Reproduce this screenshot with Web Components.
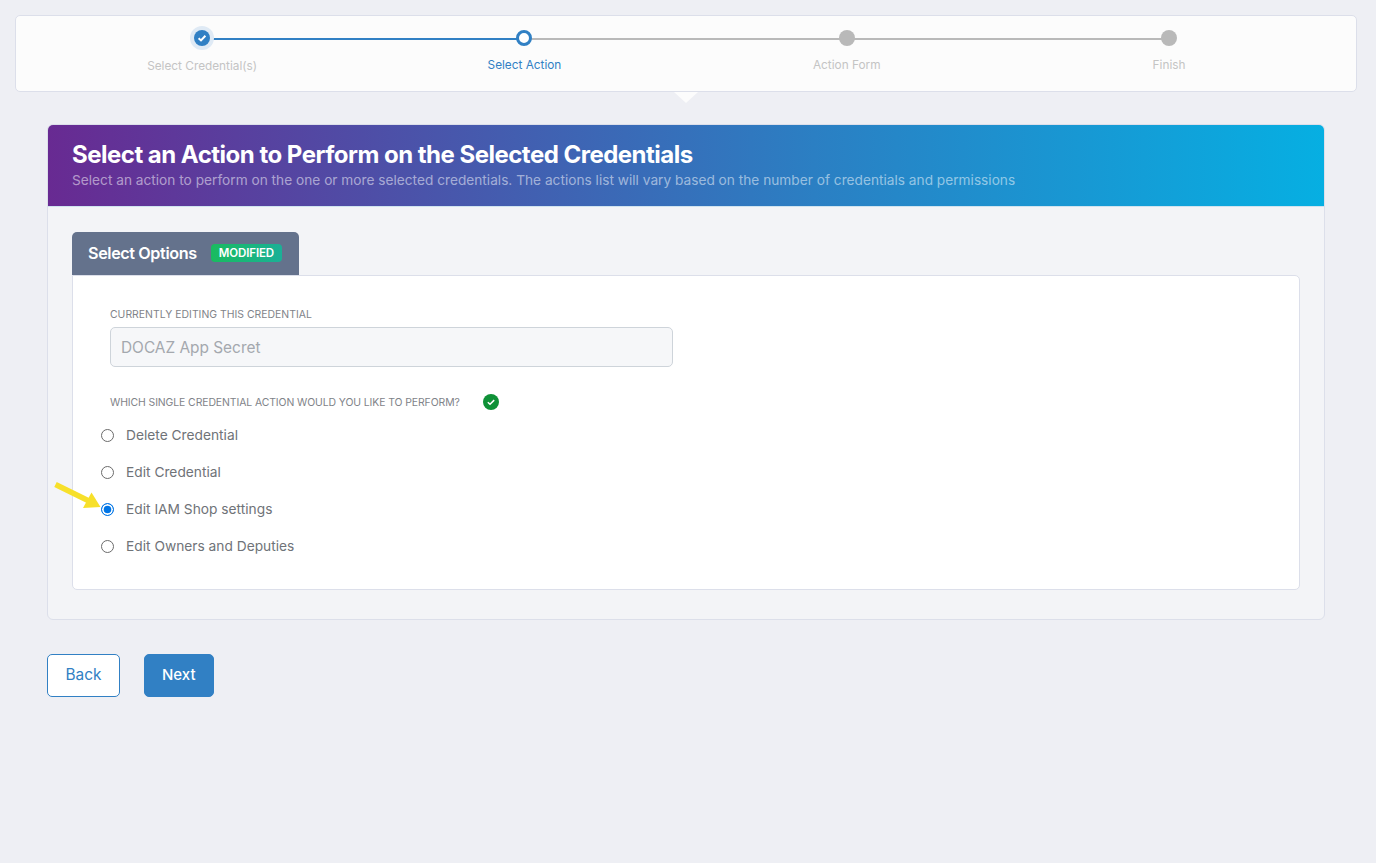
<!DOCTYPE html>
<html>
<head>
<meta charset="utf-8">
<title>Select Action</title>
<style>
    html, body { margin: 0; height: 100%; }
    body {
        background: #eeeff4;
        font-family: Inter, Roboto, "Liberation Sans", sans-serif;
        padding: 15px 19px 0 15px;
        box-sizing: border-box;
    }
</style>
</head>
<body>
<wizard-stepper>
    <wizard-step state="done" style="--label-shift: 1px">Select Credential(s)</wizard-step>
    <wizard-step state="current">Select Action</wizard-step>
    <wizard-step>Action Form</wizard-step>
    <wizard-step state="last">Finish</wizard-step>
</wizard-stepper>

<action-panel heading="Select an Action to Perform on the Selected Credentials"
    sub="Select an action to perform on the one or more selected credentials. The actions list will vary based on the number of credentials and permissions">
    <options-card tab="Select Options" badge="MODIFIED">
        <field-label>CURRENTLY EDITING THIS CREDENTIAL</field-label>
        <readonly-input>DOCAZ App Secret</readonly-input>
        <field-label checked style="margin-top: 28px; letter-spacing: -0.1px">WHICH SINGLE CREDENTIAL ACTION WOULD YOU LIKE TO PERFORM?</field-label>
        <radio-option style="margin-top: 7px">Delete Credential</radio-option>
        <radio-option>Edit Credential</radio-option>
        <radio-option selected>Edit IAM Shop settings</radio-option>
        <radio-option>Edit Owners and Deputies</radio-option>
    </options-card>
</action-panel>

<button-row>
    <app-button kind="outline">Back</app-button>
    <app-button>Next</app-button>
</button-row>

<script>
// Stepper bar with the little pointer under the current step
class WizardStepper extends HTMLElement {
    constructor() {
        super();
        this.attachShadow({ mode: 'open' });
        this.shadowRoot.innerHTML = `
<style>
    :host {
        display: grid;
        grid-template-columns: repeat(4, 322.3px);
        position: relative;
        height: 77px;
        box-sizing: border-box;
        padding: 0 0 0 25px;
        background: #fcfcfc;
        border: 1px solid #dcdfea;
        border-radius: 5px;
    }
    .pointer {
        position: absolute;
        left: 658px;
        top: 76px;
        width: 0;
        height: 0;
        border-left: 12px solid transparent;
        border-right: 12px solid transparent;
        border-top: 11px solid #fcfcfc;
    }
</style>
<slot></slot>
<div class="pointer"></div>`;
    }
}

class WizardStep extends HTMLElement {
    constructor() {
        super();
        this.attachShadow({ mode: 'open' });
        const state = this.getAttribute('state') || 'todo';
        const check = state === 'done'
            ? '<svg width="16" height="16" viewBox="0 0 16 16"><path d="M4.6 8.2 7 10.4 11.4 5.8" fill="none" stroke="#fff" stroke-width="2"/></svg>'
            : '';
        this.shadowRoot.innerHTML = `
<style>
    :host {
        display: block;
        position: relative;
        text-align: center;
        font-size: 11.8px;
        line-height: 14px;
        color: #c4c4c4;
    }
    .line {
        position: absolute;
        left: 50%;
        width: 100%;
        top: 22px;
        height: 2px;
        background: #b9b9b9;
    }
    :host([state="done"]) .line { background: #3180c4; }
    :host([state="last"]) .line { display: none; }
    .dot {
        position: relative;
        box-sizing: border-box;
        width: 16px;
        height: 16px;
        margin: 14px auto 0;
        border-radius: 50%;
        background: #b9b9b9;
    }
    :host([state="done"]) .dot {
        background: #3180c4;
        box-shadow: 0 0 0 4px #dfeaf5;
    }
    :host([state="current"]) .dot {
        background: #fff;
        border: 3px solid #3180c4;
    }
    svg { display: block; }
    .label {
        margin-top: 12px;
        position: relative;
        top: var(--label-shift, 0);
    }
    :host([state="current"]) .label { color: #3180c4; }
</style>
<div class="line"></div>
<div class="dot">${check}</div>
<div class="label"><slot></slot></div>`;
    }
}

// Main panel: gradient header and grey body
class ActionPanel extends HTMLElement {
    constructor() {
        super();
        this.attachShadow({ mode: 'open' });
        this.shadowRoot.innerHTML = `
<style>
    :host {
        display: block;
        width: 1278px;
        height: 496px;
        box-sizing: border-box;
        margin: 32px 0 0 32px;
        background: #f3f4f7;
        border: 1px solid #dcdfea;
        border-radius: 6px;
    }
    header {
        height: 82px;
        box-sizing: border-box;
        padding: 15px 24px 0;
        background: linear-gradient(to right, #682a92, #2b7fc3 60%, #06afe2);
        border-bottom: 1px solid #cfe3ef;
        border-radius: 5px 5px 0 0;
        color: #fff;
    }
    h1 {
        margin: 0;
        font-size: 24px;
        line-height: 30px;
        font-weight: 700;
        letter-spacing: -0.51px;
    }
    p {
        margin: 1px 0 0;
        font-size: 13.7px;
        line-height: 18px;
        color: rgba(255, 255, 255, .52);
    }
    .body { padding: 25px 24px 0; }
</style>
<header>
    <h1></h1>
    <p></p>
</header>
<div class="body"><slot></slot></div>`;
        this.shadowRoot.querySelector('h1').innerText = this.getAttribute('heading');
        this.shadowRoot.querySelector('p').innerText = this.getAttribute('sub');
    }
}

class OptionsCard extends HTMLElement {
    constructor() {
        super();
        this.attachShadow({ mode: 'open' });
        this.shadowRoot.innerHTML = `
<style>
    :host { display: block; }
    .tab {
        display: flex;
        align-items: center;
        gap: 14px;
        width: 227px;
        height: 43px;
        box-sizing: border-box;
        padding: 0 16px 2px 16px;
        background: #64728c;
        border-radius: 5px 5px 0 0;
        color: #fff;
        font-size: 16.2px;
        font-weight: 600;
        letter-spacing: -0.4px;
    }
    .badge {
        padding: 0 8px;
        height: 18px;
        line-height: 18px;
        border-radius: 4px;
        background: linear-gradient(to right, #19bb5f, #1bb097);
        font-size: 11.5px;
        letter-spacing: -0.1px;
    }
    .card {
        height: 315px;
        box-sizing: border-box;
        padding: 31px 37px 0;
        background: #fff;
        border: 1px solid #dcdfea;
        border-radius: 0 5px 5px 5px;
    }
</style>
<div class="tab"><span class="name"></span><span class="badge"></span></div>
<div class="card"><slot></slot></div>`;
        this.shadowRoot.querySelector('.name').innerText = this.getAttribute('tab');
        this.shadowRoot.querySelector('.badge').innerText = this.getAttribute('badge');
    }
}

class FieldLabel extends HTMLElement {
    constructor() {
        super();
        this.attachShadow({ mode: 'open' });
        const tick = this.hasAttribute('checked')
            ? '<svg width="16" height="16" viewBox="0 0 16 16"><circle cx="8" cy="8" r="8" fill="#0f9137"/><path d="M4.8 8.2 7 10.3 11.2 6.1" fill="none" stroke="#fff" stroke-width="1.5"/></svg>'
            : '';
        this.shadowRoot.innerHTML = `
<style>
    :host {
        display: flex;
        align-items: center;
        gap: 23px;
        height: 14px;
        font-size: 10.45px;
        color: #7f8389;
    }
    svg { flex: none; }
</style>
<span><slot></slot></span>${tick}`;
    }
}

class ReadonlyInput extends HTMLElement {
    constructor() {
        super();
        this.attachShadow({ mode: 'open' });
        this.shadowRoot.innerHTML = `
<style>
    :host {
        display: flex;
        align-items: center;
        width: 563px;
        height: 40px;
        box-sizing: border-box;
        margin-top: 6px;
        padding: 0 10px;
        background: #f6f7f9;
        border: 1px solid #ced4da;
        border-radius: 5px;
        font-size: 15.4px;
        color: #a4a8ae;
    }
</style>
<slot></slot>`;
    }
}

class RadioOption extends HTMLElement {
    constructor() {
        super();
        this.attachShadow({ mode: 'open' });
        const arrow = this.hasAttribute('selected')
            ? `<svg class="arrow" width="52" height="36" viewBox="0 0 52 36">
                 <path d="M2.5 4.5 37 21.5" stroke="#f7e02a" stroke-width="5.5" fill="none"/>
                 <path d="M47.5 27 30 28 38.5 12.5Z" fill="#f7e02a"/>
               </svg>`
            : '';
        this.shadowRoot.innerHTML = `
<style>
    :host {
        display: flex;
        align-items: center;
        position: relative;
        height: 37px;
        margin-left: -9px;
        font-size: 13.75px;
        color: #6f7378;
    }
    .mark {
        box-sizing: border-box;
        width: 13px;
        height: 13px;
        margin: 2px 12px 0 0;
        border: 1.2px solid #6b6b6b;
        border-radius: 50%;
        background: #fff;
    }
    :host([selected]) .mark {
        border: 1.5px solid #0075e6;
        background: #0075e6;
        box-shadow: inset 0 0 0 1.7px #fff;
    }
    .arrow {
        position: absolute;
        left: -48px;
        top: -10px;
    }
</style>
${arrow}<span class="mark"></span><span><slot></slot></span>`;
    }
}

class ButtonRow extends HTMLElement {
    constructor() {
        super();
        this.attachShadow({ mode: 'open' });
        this.shadowRoot.innerHTML = `
<style>
    :host {
        display: flex;
        gap: 24px;
        margin: 34px 0 0 32px;
    }
</style>
<slot></slot>`;
    }
}

class AppButton extends HTMLElement {
    constructor() {
        super();
        this.attachShadow({ mode: 'open' });
        this.shadowRoot.innerHTML = `
<style>
    :host {
        display: flex;
        align-items: center;
        height: 43px;
        box-sizing: border-box;
        padding: 0 17px 2px;
        background: #3180c4;
        border: 1px solid #3180c4;
        border-radius: 5px;
        color: #fff;
        font-size: 15px;
        font-weight: 500;
    }
    :host([kind="outline"]) {
        padding: 0 17.5px 2px;
        background: #fff;
        color: #3180c4;
        font-size: 15.4px;
        font-weight: 400;
    }
</style>
<slot></slot>`;
    }
}

customElements.define('wizard-stepper', WizardStepper);
customElements.define('wizard-step', WizardStep);
customElements.define('action-panel', ActionPanel);
customElements.define('options-card', OptionsCard);
customElements.define('field-label', FieldLabel);
customElements.define('readonly-input', ReadonlyInput);
customElements.define('radio-option', RadioOption);
customElements.define('button-row', ButtonRow);
customElements.define('app-button', AppButton);
</script>
</body>
</html>
